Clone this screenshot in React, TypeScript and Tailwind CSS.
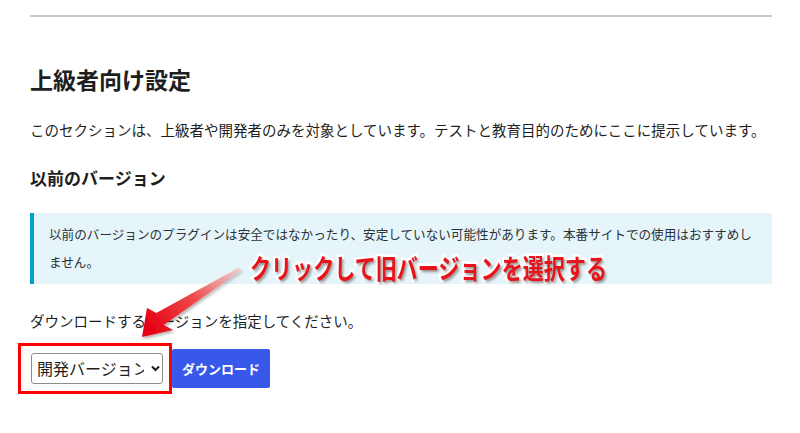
import React from "react";

const jp = "font-['Noto_Sans_CJK_JP','Noto_Sans',sans-serif]";

export default function App() {
  return (
    <div className={`relative w-[800px] h-[433px] overflow-hidden bg-white text-[#1e1e1e] ${jp}`}>
      <div className="pl-[30px] pr-[28px] pt-[15px]">
        <hr className="border-0 border-t-2 border-[#c9c9c9]" />
        <h2 className="mt-[46px] text-[23px] leading-[32px] font-bold">上級者向け設定</h2>
        <p className="mt-[23px] text-[14.5px] leading-[24px]">
          このセクションは、上級者や開発者のみを対象としています。テストと教育目的のためにここに提示しています。
        </p>
        <h3 className="mt-[24px] text-[17px] leading-[24px] font-bold">以前のバージョン</h3>
        <div className="mt-[23px] border-l-4 border-[#00a0d2] bg-[#e5f5fa] pl-[15px] pr-[15px] pt-[7px] pb-[8px]">
          <p className="text-[12.6px] leading-[28px] text-[#2c3338]">
            以前のバージョンのプラグインは安全ではなかったり、安定していない可能性があります。本番サイトでの使用はおすすめしません。
          </p>
        </div>
        <p className="mt-[25px] text-[14.5px] leading-[24px]">ダウンロードするバージョンを指定してください。</p>
        <div className="mt-[16px] flex items-center">
          <div className="relative ml-px">
            <select
              defaultValue="dev"
              className="appearance-none h-[31px] w-[132px] rounded-[3px] border border-[#8c8c8c] bg-white pl-[5px] pr-[18px] text-[16px] leading-[29px] text-[#1e1e1e]"
            >
              <option value="dev">開発バージョン</option>
            </select>
            <svg
              className="pointer-events-none absolute right-[3px] top-[12px]"
              width="9"
              height="7"
              viewBox="0 0 9 7"
            >
              <path d="M1 1.5 L4.5 5 L8 1.5" fill="none" stroke="#1e1e1e" strokeWidth="2" />
            </svg>
          </div>
          <button className="ml-[9px] h-[39px] w-[98px] rounded-[2px] bg-[#3858e9] text-[13px] font-bold text-white">
            ダウンロード
          </button>
        </div>
      </div>

      {/* annotation: red frame */}
      <div className="pointer-events-none absolute left-[18px] top-[343px] h-[51px] w-[154px] border-[3px] border-[#ff0000]" />

      {/* annotation: arrow */}
      <svg className="pointer-events-none absolute left-0 top-0" width="800" height="433" viewBox="0 0 800 433">
        <defs>
          <linearGradient id="ag" x1="240" y1="269" x2="150" y2="330" gradientUnits="userSpaceOnUse">
            <stop offset="0" stopColor="#f6b3b3" stopOpacity="0.6" />
            <stop offset="0.5" stopColor="#ee4a4a" />
            <stop offset="1" stopColor="#e60012" />
          </linearGradient>
          <filter id="as" x="-20%" y="-20%" width="140%" height="140%">
            <feDropShadow dx="1.5" dy="2" stdDeviation="1.5" floodColor="#000" floodOpacity="0.3" />
          </filter>
        </defs>
        <polygon
          points="142,337 147,308 156.3,313.1 239,267.5 241,270.5 163.7,324.9 173,330"
          fill="url(#ag)"
          filter="url(#as)"
        />
      </svg>

      {/* annotation: caption */}
      <div className="pointer-events-none absolute left-[250px] top-[254px] origin-left scale-x-[0.78] whitespace-nowrap text-[27px] leading-[28px] font-bold text-[#e8141b] [-webkit-text-stroke:5px_white] [paint-order:stroke_fill] [text-shadow:2px_2px_3px_rgba(0,0,0,0.45)]">
        クリックして旧バージョンを選択する
      </div>
    </div>
  );
}
